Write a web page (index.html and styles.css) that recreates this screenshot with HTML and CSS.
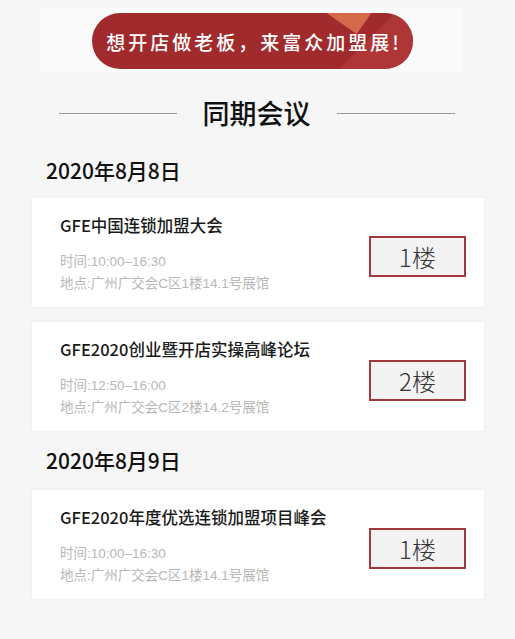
FILE: index.html
```html
<!DOCTYPE html>
<html lang="zh-CN">
<head>
    <meta charset="UTF-8">
    <meta name="viewport" content="width=device-width, initial-scale=1.0">
    <title>同期会议</title>
    <link rel="stylesheet" href="styles.css">
</head>
<body>
    <!-- Banner -->
    <div class="banner-band">
        <div class="banner-pill"><span>想开店做老板，来富众加盟展!</span></div>
    </div>

    <div class="section-title">
        <span class="line"></span>
        <h2>同期会议</h2>
        <span class="line"></span>
    </div>

    <h3 class="date">2020年8月8日</h3>
    <div class="card">
        <div class="info">
            <p class="name">GFE中国连锁加盟大会</p>
            <p class="meta meta-time">时间:10:00–16:30</p>
            <p class="meta">地点:广州广交会C区1楼14.1号展馆</p>
        </div>
        <div class="floor">1楼</div>
    </div>
    <div class="card">
        <div class="info">
            <p class="name">GFE2020创业暨开店实操高峰论坛</p>
            <p class="meta meta-time">时间:12:50–16:00</p>
            <p class="meta">地点:广州广交会C区2楼14.2号展馆</p>
        </div>
        <div class="floor">2楼</div>
    </div>

    <h3 class="date date-second">2020年8月9日</h3>
    <div class="card">
        <div class="info">
            <p class="name">GFE2020年度优选连锁加盟项目峰会</p>
            <p class="meta meta-time">时间:10:00–16:30</p>
            <p class="meta">地点:广州广交会C区1楼14.1号展馆</p>
        </div>
        <div class="floor">1楼</div>
    </div>
</body>
</html>
```

FILE: styles.css
```css
body { margin: 0; padding: 0 0 40px; background: #f6f6f6; font-family: "Liberation Sans", "Noto Sans CJK SC", sans-serif; color: #222; }
p, h2, h3 { margin: 0; }

/* Banner */
.banner-band { margin: 8px 0 0 40px; width: 423px; height: 64px; padding: 5px 0 0 52px; box-sizing: border-box; background: #fafafa; }
.banner-pill { position: relative; overflow: hidden; width: 321px; height: 56px; border-radius: 28px; background: #a12a2c; display: flex; align-items: center; justify-content: center; }
.banner-pill::before { content: ""; position: absolute; left: 236px; top: -34px; width: 46px; height: 46px; background: #d4694c; transform: rotate(35deg); }
.banner-pill::after { content: ""; position: absolute; left: 250px; top: 18px; width: 120px; height: 120px; background: #b2393b; transform: rotate(45deg); opacity: 0.8; }
.banner-pill span { position: relative; z-index: 1; color: #fff; font-family: "Noto Sans CJK SC", sans-serif; font-size: 19px; font-weight: 500; letter-spacing: 3px; margin-left: 3px; }

/* Section title */
.section-title { margin-top: 22px; height: 38px; display: flex; align-items: center; justify-content: center; gap: 26px; padding-right: 2px; }
.section-title .line { width: 118px; height: 1px; background: #9a9a9a; }
.section-title h2 { font-family: "Noto Sans CJK SC", sans-serif; font-size: 27px; font-weight: 500; line-height: 38px; color: #111; }

/* Dates */
.date { margin: 24px 0 14px 46px; font-family: "Noto Sans CJK SC", sans-serif; font-size: 21px; font-weight: 500; line-height: 28px; color: #111; }
.date-second { margin-top: 15px; margin-bottom: 16px; }

/* Cards */
.card { margin: 0 31px 15px 32px; background: #fff; box-shadow: 0 0 3px rgba(0, 0, 0, 0.06); padding: 16px 18px 12px 28px; display: flex; align-items: center; justify-content: space-between; }
.name { font-family: "Noto Sans CJK SC", sans-serif; font-size: 16.5px; font-weight: 500; line-height: 22px; color: #1a1a1a; }
.meta { font-size: 13.5px; line-height: 22px; color: #b8b8b8; }
.meta-time { margin-top: 15px; }
.floor { width: 97px; height: 41px; box-sizing: border-box; border: 2px solid #a3383a; background: #f3f3f3; display: flex; align-items: center; justify-content: center; font-family: "Noto Sans CJK SC", sans-serif; font-size: 24px; font-weight: 300; color: #333; margin-top: 4px; }
```
